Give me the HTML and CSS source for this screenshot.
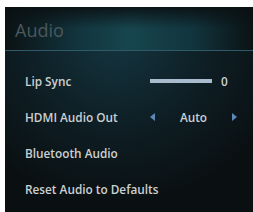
FILE: index.html
```html
<!DOCTYPE html>
<html>
<head>
  <meta charset="UTF-8">
  <title>Audio</title>
  <link rel="stylesheet" href="styles.css">
</head>
<body>
  <div class="panel">
    <div class="panel-header">Audio</div>

    <div class="menu">
      <div class="menu-row">
        <span class="label">Lip Sync</span>
        <div class="control slider">
          <div class="slider-bar"></div>
          <span class="value">0</span>
        </div>
      </div>
      <div class="menu-row">
        <span class="label">HDMI Audio Out</span>
        <div class="control picker">
          <svg width="5" height="8" viewBox="0 0 5 8"><polygon points="5,0 0,4 5,8" fill="#5b88b4"></polygon></svg>
          <span class="value">Auto</span>
          <svg width="5" height="8" viewBox="0 0 5 8"><polygon points="0,0 5,4 0,8" fill="#5b88b4"></polygon></svg>
        </div>
      </div>
      <div class="menu-row">
        <span class="label">Bluetooth Audio</span>
      </div>
      <div class="menu-row">
        <span class="label">Reset Audio to Defaults</span>
      </div>
    </div>
  </div>
</body>
</html>
```

FILE: styles.css
```css
body {
  margin: 0;
  background-color: #ffffff;
  font-family: "Open Sans", "Liberation Sans", sans-serif;
  overflow: hidden;
}
.panel {
  margin: 7px 0 0 5px;
  height: 205px;
  background: radial-gradient(ellipse 70% 80% at 45% 15%, #143540 0%, #0e1e24 55%, #0a1012 100%);
}
.panel-header {
  height: 43px;
  padding-left: 10px;
  line-height: 46px;
  font-size: 18px;
  color: #4b585c;
  border-bottom: 1px solid #2f5b68;
  background:
    linear-gradient(to bottom, rgba(10, 16, 18, 0.9) 0%, rgba(10, 16, 18, 0) 50%, rgba(10, 16, 18, 0) 100%),
    linear-gradient(to right, #0b1214 0%, #12353e 30%, #17454e 50%, #12353e 75%, #0b1214 100%);
}
.menu {
  padding-top: 12px;
}
.menu-row {
  height: 36px;
  display: flex;
  align-items: center;
  padding-left: 20px;
}
.label {
  flex: 0 0 125px;
  white-space: nowrap;
  font-size: 11.8px;
  font-weight: 600;
  color: #cbd0d2;
}
.control {
  display: flex;
  align-items: center;
  font-size: 11.8px;
  font-weight: 600;
  color: #cbd0d2;
}
.slider-bar {
  width: 62px;
  height: 4px;
  background-color: #a9bccd;
}
.slider .value {
  margin-left: 9px;
}
.picker {
  width: 87px;
  justify-content: space-between;
}
```
